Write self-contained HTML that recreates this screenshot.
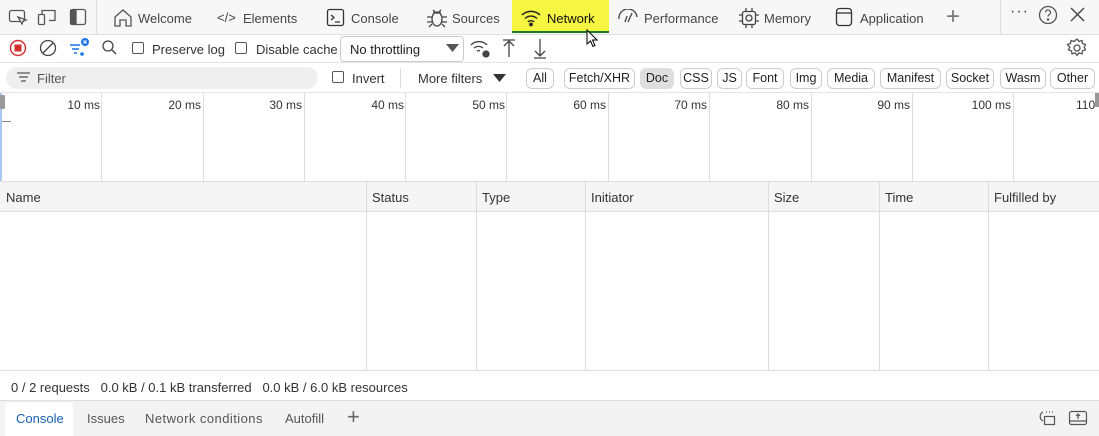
<!DOCTYPE html>
<html><head><style>
*{box-sizing:border-box;margin:0;padding:0}
body{width:1099px;height:436px;overflow:hidden;background:#fff;font-family:"Liberation Sans",sans-serif;font-size:13px;color:#333;position:relative}
.abs{position:absolute}
.t{position:absolute;white-space:nowrap}
svg{position:absolute}
.chip{position:absolute;top:68px;height:21px;border:1px solid #ccc;border-radius:6px;font-size:12.5px;line-height:19px;text-align:center;color:#222;background:#fff}
.vl{position:absolute;width:1px;background:#ddd}
.tl{position:absolute;top:98px;font-size:12px;width:60px;text-align:right;white-space:nowrap}
</style></head><body>
<!-- top bar -->
<div class="abs" style="left:0;top:0;width:1099px;height:35px;background:#f7f7f7;border-bottom:1px solid #e0e0e0"></div>
<div class="vl" style="left:96px;top:0;height:35px;background:#ddd"></div>
<div class="vl" style="left:1000px;top:0;height:35px;background:#ddd"></div>
<svg width="96" height="35" fill="none" stroke="#555" stroke-width="1.3">
<rect x="9.5" y="10.5" width="15" height="11" rx="2"/><path d="M18 17 l4 7 1-3 3-1z" fill="#fff"/>
<rect x="38.5" y="14.5" width="6" height="10" rx="1"/><path d="M42 14 v-3.5 h13 v10 h-6"/>
<rect x="70.5" y="9.5" width="15" height="15" rx="2"/><rect x="71" y="10" width="5" height="14" fill="#555"/>
</svg>
<svg width="25" height="25" style="left:111px;top:6px" fill="none" stroke="#555" stroke-width="1.3"><path d="M4 11 l8-7 8 7 v9 h-5 v-6 h-6 v6 h-5z"/></svg>
<div class="t" style="left:138px;top:11px;color:#444">Welcome</div>
<div class="t" style="left:217px;top:10px;color:#444">&lt;/&gt;</div>
<div class="t" style="left:243px;top:11px;color:#444">Elements</div>
<svg width="20" height="20" style="left:326px;top:8px" fill="none" stroke="#333" stroke-width="1.3"><rect x="1.5" y="1.5" width="16" height="16" rx="2"/><path d="M5 7l3 2.5-3 2.5M9 14h5"/></svg>
<div class="t" style="left:351px;top:11px;color:#444">Console</div>
<svg width="22" height="22" style="left:426px;top:7px" fill="none" stroke="#444" stroke-width="1.3"><ellipse cx="11" cy="12" rx="5" ry="7"/><path d="M7 6h8M1 10h5M16 10h5M1 15h5M16 15h5M3 20l3-3M19 20l-3-3M7 3l2 2M15 3l-2 2"/></svg>
<div class="t" style="left:452px;top:11px;color:#444">Sources</div>
<div class="abs" style="left:512px;top:0;width:97px;height:33px;background:#f5f542"></div>
<div class="abs" style="left:512px;top:31px;width:97px;height:2px;background:#1a7a2a"></div>
<svg width="22" height="18" style="left:520px;top:9px" fill="none" stroke="#222" stroke-width="1.4"><path d="M2 6a13 13 0 0 1 18 0M5 9.5a8.5 8.5 0 0 1 12 0M8 13a4 4 0 0 1 6 0"/><circle cx="11" cy="15.5" r="1.2" fill="#222"/></svg>
<div class="t" style="left:547px;top:11px;color:#111">Network</div>
<svg width="14" height="20" style="left:586px;top:29px"><path d="M1 1v14l3.5-3 2.5 5.5 2-1-2.5-5.5h4.5z" fill="#fff" stroke="#000" stroke-width="1"/></svg>
<svg width="24" height="18" style="left:617px;top:9px" fill="none" stroke="#444" stroke-width="1.3"><path d="M2 10a9 9 0 0 1 18-2M11 13l4-9M8 13l2-6"/></svg>
<div class="t" style="left:644px;top:11px;color:#444">Performance</div>
<svg width="22" height="22" style="left:738px;top:7px" fill="none" stroke="#444" stroke-width="1.3"><rect x="4.5" y="4.5" width="13" height="13" rx="2"/><circle cx="11" cy="11" r="3"/><path d="M8 1v3M14 1v3M8 18v3M14 18v3M1 8h3M1 14h3M18 8h3M18 14h3"/></svg>
<div class="t" style="left:764px;top:11px;color:#444">Memory</div>
<svg width="20" height="22" style="left:835px;top:7px" fill="none" stroke="#333" stroke-width="1.3"><rect x="1.5" y="1.5" width="15" height="17" rx="3"/><path d="M2 6h14"/></svg>
<div class="t" style="left:860px;top:11px;color:#444">Application</div>
<div class="t" style="left:946px;top:3px;font-size:24px;color:#777;font-weight:300">+</div>
<div class="t" style="left:1010px;top:3px;font-size:16px;color:#444;letter-spacing:1px">···</div>
<svg width="22" height="22" style="left:1037px;top:4px" fill="none" stroke="#555" stroke-width="1.3"><circle cx="11" cy="11" r="8.5"/><path d="M8.5 8.5a2.5 2.5 0 1 1 3.5 2.3c-.7.4-1 .8-1 1.7"/><circle cx="11" cy="15.5" r=".6" fill="#555"/></svg>
<svg width="20" height="20" style="left:1068px;top:5px" stroke="#444" stroke-width="1.4"><path d="M3 3l13 13M16 3L3 16"/></svg>

<!-- toolbar -->
<svg width="140" height="28" style="left:0;top:35px" fill="none">
<circle cx="18" cy="13" r="7.5" stroke="#d32f2f" stroke-width="1.4"/><rect x="14.5" y="9.5" width="7" height="7" fill="#d32f2f"/>
<circle cx="48" cy="13" r="7.5" stroke="#444" stroke-width="1.3"/><path d="M43 18l10-10" stroke="#444" stroke-width="1.3"/>
<path d="M70 10h10M72 14h7M74 18h3" stroke="#1a73e8" stroke-width="1.4"/><circle cx="85" cy="7" r="4" fill="#1a73e8"/><path d="M83.5 5.5l3 3M86.5 5.5l-3 3" stroke="#fff" stroke-width="1.1"/><circle cx="82" cy="19" r="1.8" fill="#1a73e8"/>
<circle cx="108" cy="11" r="5" stroke="#444" stroke-width="1.3"/><path d="M112 15l4 4" stroke="#444" stroke-width="1.4"/>
</svg>
<div class="abs" style="left:132px;top:42px;width:12px;height:12px;border:1px solid #555;border-radius:2px"></div>
<div class="t" style="left:152px;top:42px">Preserve log</div>
<div class="abs" style="left:235px;top:42px;width:12px;height:12px;border:1px solid #555;border-radius:2px"></div>
<div class="t" style="left:256px;top:42px">Disable cache</div>
<div class="abs" style="left:340px;top:36px;width:124px;height:26px;border:1px solid #ccc;border-radius:4px"></div>
<div class="t" style="left:350px;top:42px;color:#222">No throttling</div>
<svg width="14" height="10" style="left:446px;top:44px"><path d="M0 0h13l-6.5 8z" fill="#555"/></svg>
<svg width="90" height="26" style="left:468px;top:36px" fill="none" stroke="#444" stroke-width="1.3">
<path d="M3 9a11 11 0 0 1 16 0M6 12a7 7 0 0 1 9 0M9 15a3 3 0 0 1 3 0"/><circle cx="18" cy="18" r="3" fill="#444"/>
<path d="M35 4h12M41 5v16M36 10l5-5 5 5"/>
<path d="M66 22h12M72 3v17M67 15l5 5 5-5"/>
</svg>
<svg width="22" height="22" style="left:1066px;top:37px" fill="none" stroke="#555" stroke-width="1.3"><circle cx="11" cy="11" r="3"/><path d="M11 2l2 2.5 3-1 .5 3 3 1-1.3 2.7 1.3 2.7-3 1-.5 3-3-1-2 2.5-2-2.5-3 1-.5-3-3-1 1.3-2.7L1.5 7.5l3-1 .5-3 3 1z"/></svg>

<!-- filter row -->
<div class="abs" style="left:0;top:62px;width:1099px;height:1px;background:#e5e5e5"></div>
<div class="abs" style="left:6px;top:67px;width:312px;height:22px;background:#efefef;border-radius:11px"></div>
<svg width="16" height="14" style="left:16px;top:71px" stroke="#555" stroke-width="1.3"><path d="M1 2h13M3 6h9M5 10h5"/></svg>
<div class="t" style="left:37px;top:71px;color:#555">Filter</div>
<div class="abs" style="left:332px;top:71px;width:12px;height:12px;border:1px solid #555;border-radius:2px"></div>
<div class="t" style="left:352px;top:71px">Invert</div>
<div class="vl" style="left:400px;top:68px;height:20px"></div>
<div class="t" style="left:418px;top:71px">More filters</div>
<svg width="14" height="10" style="left:493px;top:74px"><path d="M0 0h13l-6.5 8z" fill="#333"/></svg>
<div class="chip" style="left:526px;width:28px">All</div>
<div class="chip" style="left:564px;width:71px">Fetch/XHR</div>
<div class="chip" style="left:640px;width:34px;background:#dedede;border-color:#dedede">Doc</div>
<div class="chip" style="left:680px;width:32px">CSS</div>
<div class="chip" style="left:717px;width:25px">JS</div>
<div class="chip" style="left:746px;width:38px">Font</div>
<div class="chip" style="left:790px;width:32px">Img</div>
<div class="chip" style="left:827px;width:48px">Media</div>
<div class="chip" style="left:880px;width:61px">Manifest</div>
<div class="chip" style="left:946px;width:48px">Socket</div>
<div class="chip" style="left:1000px;width:46px">Wasm</div>
<div class="chip" style="left:1050px;width:45px">Other</div>

<!-- timeline -->
<div class="abs" style="left:0;top:92px;width:1099px;height:1px;background:#e5e5e5"></div>
<div class="abs" style="left:0;top:93px;width:2px;height:88px;background:#a8c8f0"></div>
<div class="abs" style="left:0;top:95px;width:5px;height:14px;background:#999;border-radius:1px"></div>
<div class="abs" style="left:2px;top:121px;width:9px;height:1px;background:#888"></div>
<div class="vl" style="left:101px;top:93px;height:88px"></div>
<div class="vl" style="left:203px;top:93px;height:88px"></div>
<div class="vl" style="left:304px;top:93px;height:88px"></div>
<div class="vl" style="left:405px;top:93px;height:88px"></div>
<div class="vl" style="left:506px;top:93px;height:88px"></div>
<div class="vl" style="left:608px;top:93px;height:88px"></div>
<div class="vl" style="left:709px;top:93px;height:88px"></div>
<div class="vl" style="left:811px;top:93px;height:88px"></div>
<div class="vl" style="left:912px;top:93px;height:88px"></div>
<div class="vl" style="left:1013px;top:93px;height:88px"></div>
<div class="tl" style="left:40px">10 ms</div>
<div class="tl" style="left:141px">20 ms</div>
<div class="tl" style="left:242px">30 ms</div>
<div class="tl" style="left:344px">40 ms</div>
<div class="tl" style="left:445px">50 ms</div>
<div class="tl" style="left:546px">60 ms</div>
<div class="tl" style="left:647px">70 ms</div>
<div class="tl" style="left:749px">80 ms</div>
<div class="tl" style="left:850px">90 ms</div>
<div class="tl" style="left:951px">100 ms</div>
<div class="t" style="left:1076px;top:98px;font-size:12px">110</div>
<div class="abs" style="left:1095px;top:93px;width:4px;height:14px;background:#999"></div>

<!-- table -->
<div class="abs" style="left:0;top:181px;width:1099px;height:31px;background:#f5f5f5;border-top:1px solid #ddd;border-bottom:1px solid #ddd"></div>
<div class="vl" style="left:366px;top:182px;height:188px"></div>
<div class="vl" style="left:476px;top:182px;height:188px"></div>
<div class="vl" style="left:585px;top:182px;height:188px"></div>
<div class="vl" style="left:768px;top:182px;height:188px"></div>
<div class="vl" style="left:879px;top:182px;height:188px"></div>
<div class="vl" style="left:988px;top:182px;height:188px"></div>
<div class="t" style="left:6px;top:190px">Name</div>
<div class="t" style="left:372px;top:190px">Status</div>
<div class="t" style="left:482px;top:190px">Type</div>
<div class="t" style="left:591px;top:190px">Initiator</div>
<div class="t" style="left:774px;top:190px">Size</div>
<div class="t" style="left:885px;top:190px">Time</div>
<div class="t" style="left:994px;top:190px">Fulfilled by</div>

<!-- status -->
<div class="abs" style="left:0;top:370px;width:1099px;height:1px;background:#ddd"></div>
<div class="t" style="left:11px;top:380px">0 / 2 requests&nbsp;&nbsp;&nbsp;0.0 kB / 0.1 kB transferred&nbsp;&nbsp;&nbsp;0.0 kB / 6.0 kB resources</div>

<!-- bottom tabs -->
<div class="abs" style="left:0;top:400px;width:1099px;height:36px;background:#f3f3f3;border-top:1px solid #ddd"></div>
<div class="abs" style="left:5px;top:403px;width:68px;height:33px;background:#fff"></div>
<div class="t" style="left:16px;top:411px;color:#1a5fb4">Console</div>
<div class="t" style="left:87px;top:411px;color:#555">Issues</div>
<div class="t" style="left:145px;top:411px;color:#555;letter-spacing:0.45px">Network conditions</div>
<div class="t" style="left:285px;top:411px;color:#555">Autofill</div>
<div class="t" style="left:347px;top:404px;font-size:22px;color:#666;font-weight:300">+</div>
<svg width="70" height="24" style="left:1035px;top:407px" fill="none" stroke="#555" stroke-width="1.2">
<path d="M8 5a5 5 0 0 0 0 9"/><rect x="9.5" y="9.5" width="10" height="8"/><path d="M11 5h1M14 5h1M17 5h1"/>
<rect x="34.5" y="4.5" width="17" height="13" rx="2"/><path d="M35 14h16M43 12V7M41 9l2-2 2 2"/>
</svg>
</body></html>
